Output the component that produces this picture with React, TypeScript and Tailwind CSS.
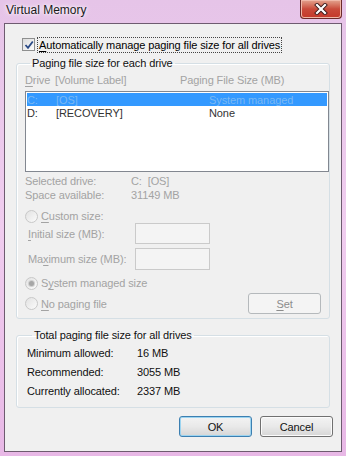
import React from 'react';

const font = { fontFamily: '"Segoe UI", "Liberation Sans", Arial, sans-serif' };

function Radio({ checked }: { checked?: boolean }) {
  return (
    <span className="inline-flex h-[13px] w-[13px] shrink-0 items-center justify-center rounded-full border border-[#c8c8c8] bg-gradient-to-br from-[#e2e2e2] to-[#fbfbfb]">
      {checked && <span className="h-[5px] w-[5px] rounded-full bg-[#a6a6a6] shadow-[0_0_0_1px_#d0d0d0]" />}
    </span>
  );
}

function Btn({ label, k, def, disabled }: { label: string; k?: number; def?: boolean; disabled?: boolean }) {
  const text = k === undefined ? label : (
    <>
      {label.slice(0, k)}
      <span className="underline underline-offset-2">{label[k]}</span>
      {label.slice(k + 1)}
    </>
  );
  if (disabled) {
    return (
      <div className="flex h-[21px] w-[73px] items-center justify-center rounded-[3px] border border-[#b5b9bc] bg-[#f4f4f4] text-[#8c8c8c]">
        {text}
      </div>
    );
  }
  return (
    <div
      className={`flex h-[21px] w-[73px] items-center justify-center rounded-[3px] border bg-gradient-to-b from-[#f3f3f3] via-[#e9e9e9] to-[#d6d6d6] text-[#111] ${
        def ? 'border-[#3c7fb1] shadow-[inset_0_0_0_1px_#9cd4f0]' : 'border-[#707070] shadow-[inset_0_0_0_1px_#fbfbfb]'
      }`}
    >
      {text}
    </div>
  );
}

export default function App() {
  return (
    <div
      style={font}
      className="flex h-[456px] w-[346px] flex-col bg-gradient-to-b from-[#e6c4e8] via-[#f0cdef] to-[#e8b8e6] text-[11px] leading-[14px] tracking-[-0.1px]"
    >
      {/* title bar */}
      <div className="flex h-[23px] items-start justify-between pl-[6px]">
        <span className="mt-[3px] text-[12px] tracking-normal text-[#1a1a1a] [text-shadow:0_0_6px_#fff,0_0_3px_#fff]">Virtual Memory</span>
        <div className="mr-[4px] flex h-[19px] w-[42px] items-center justify-center rounded-b-[4px] border border-t-0 border-[#6b2a2a] bg-gradient-to-b from-[#e2a38f] via-[#c94a3a] to-[#c4382a] shadow-[inset_0_0_0_1px_#f0b8a8]">
          <svg width="14" height="12" viewBox="0 0 14 12">
            <path d="M3 2 L11 10 M11 2 L3 10" stroke="#3a1a1a" strokeWidth="4" strokeLinecap="square" />
            <path d="M3 2 L11 10 M11 2 L3 10" stroke="#fff" strokeWidth="2.2" strokeLinecap="square" />
          </svg>
        </div>
      </div>

      {/* client area */}
      <div className="mx-[4px] mb-[4px] flex flex-1 flex-col border border-[#6e5b70] bg-[#f0f0f0] text-black">
        <div className="ml-[17px] mt-[12px] flex h-[17px] items-center gap-[2px]">
          <span className="flex h-[13px] w-[13px] items-center justify-center border border-[#8e8f8f] bg-gradient-to-br from-[#dcdcdc] to-[#fdfdfd]">
            <svg width="10" height="10" viewBox="0 0 10 10">
              <path d="M1.5 5 L4 7.8 L8.8 1.5" fill="none" stroke="#2a4a86" strokeWidth="1.8" />
            </svg>
          </span>
          <span className="border border-dotted border-[#444] px-[1px]">
            <span className="underline underline-offset-2">A</span>utomatically manage paging file size for all drives
          </span>
        </div>

        {/* group 1 */}
        <fieldset className="mx-[11px] mt-[3px] rounded-[3px] border border-[#d5dfe5] pb-[4px] pl-[8px] shadow-[inset_1px_1px_0_#fff]">
          <legend className="ml-[5px] px-[2px] text-[#111]">Paging file size for each drive</legend>
          <div className="mt-[3px] flex h-[14px] text-[#a3a3a3]">
            <span className="w-[30px]">
              <span className="underline underline-offset-2">D</span>rive
            </span>
            <span className="w-[125px]">[Volume Label]</span>
            <span>Paging File Size (MB)</span>
          </div>
          <div className="mt-[4px] h-[81px] border border-[#828790] bg-white p-[1px]">
            <div className="flex h-[13px] items-center bg-[#3399ff] text-[#7ab8f3]">
              <span className="w-[29px]">C:</span>
              <span className="w-[153px]">[OS]</span>
              <span>System managed</span>
            </div>
            <div className="flex h-[13px] items-center text-[#333]">
              <span className="w-[29px]">D:</span>
              <span className="w-[153px]">[RECOVERY]</span>
              <span>None</span>
            </div>
          </div>

          <div className="mt-[2px] grid grid-cols-[106px_1fr] text-[#a3a3a3]">
            <span>Selected drive:</span>
            <span>C:&nbsp; [OS]</span>
            <span>Space available:</span>
            <span>31149 MB</span>
          </div>

          <div className="mt-[7px] flex h-[14px] items-center gap-[3px] text-[#a3a3a3]">
            <Radio />
            <span>
              <span className="underline underline-offset-2">C</span>ustom size:
            </span>
          </div>
          <div className="flex items-center pl-[3px] text-[#a3a3a3]">
            <span className="w-[107px]">
              <span className="underline underline-offset-2">I</span>nitial size (MB):
            </span>
            <span className="h-[21px] w-[75px] border border-[#cacaca] bg-[#f4f4f4]" />
          </div>
          <div className="mt-[4px] flex items-center pl-[3px] text-[#a3a3a3]">
            <span className="w-[107px]">
              Ma<span className="underline underline-offset-2">x</span>imum size (MB):
            </span>
            <span className="h-[22px] w-[75px] border border-[#cacaca] bg-[#f4f4f4]" />
          </div>

          <div className="mt-[6px] flex h-[14px] items-center gap-[3px] text-[#a3a3a3]">
            <Radio checked />
            <span>
              S<span className="underline underline-offset-2">y</span>stem managed size
            </span>
          </div>
          <div className="mt-[3px] flex items-center justify-between pr-[8px]">
            <div className="flex items-center gap-[3px] text-[#a3a3a3]">
              <Radio />
              <span>
                <span className="underline underline-offset-2">N</span>o paging file
              </span>
            </div>
            <Btn label="Set" k={0} disabled />
          </div>
        </fieldset>

        {/* group 2 */}
        <fieldset className="mx-[11px] mt-[9px] rounded-[3px] border border-[#d5dfe5] pb-[9px] pl-[10px] shadow-[inset_1px_1px_0_#fff]">
          <legend className="ml-[5px] px-[2px] text-[#111]">Total paging file size for all drives</legend>
          <div className="mt-[4px] grid grid-cols-[110px_1fr] gap-y-[5px] text-[#111]">
            <span>Minimum allowed:</span>
            <span>16 MB</span>
            <span>Recommended:</span>
            <span>3055 MB</span>
            <span>Currently allocated:</span>
            <span>2337 MB</span>
          </div>
        </fieldset>

        <div className="mr-[8px] mt-[8px] flex justify-end gap-[8px]">
          <Btn label="OK" def />
          <Btn label="Cancel" />
        </div>
      </div>
    </div>
  );
}
